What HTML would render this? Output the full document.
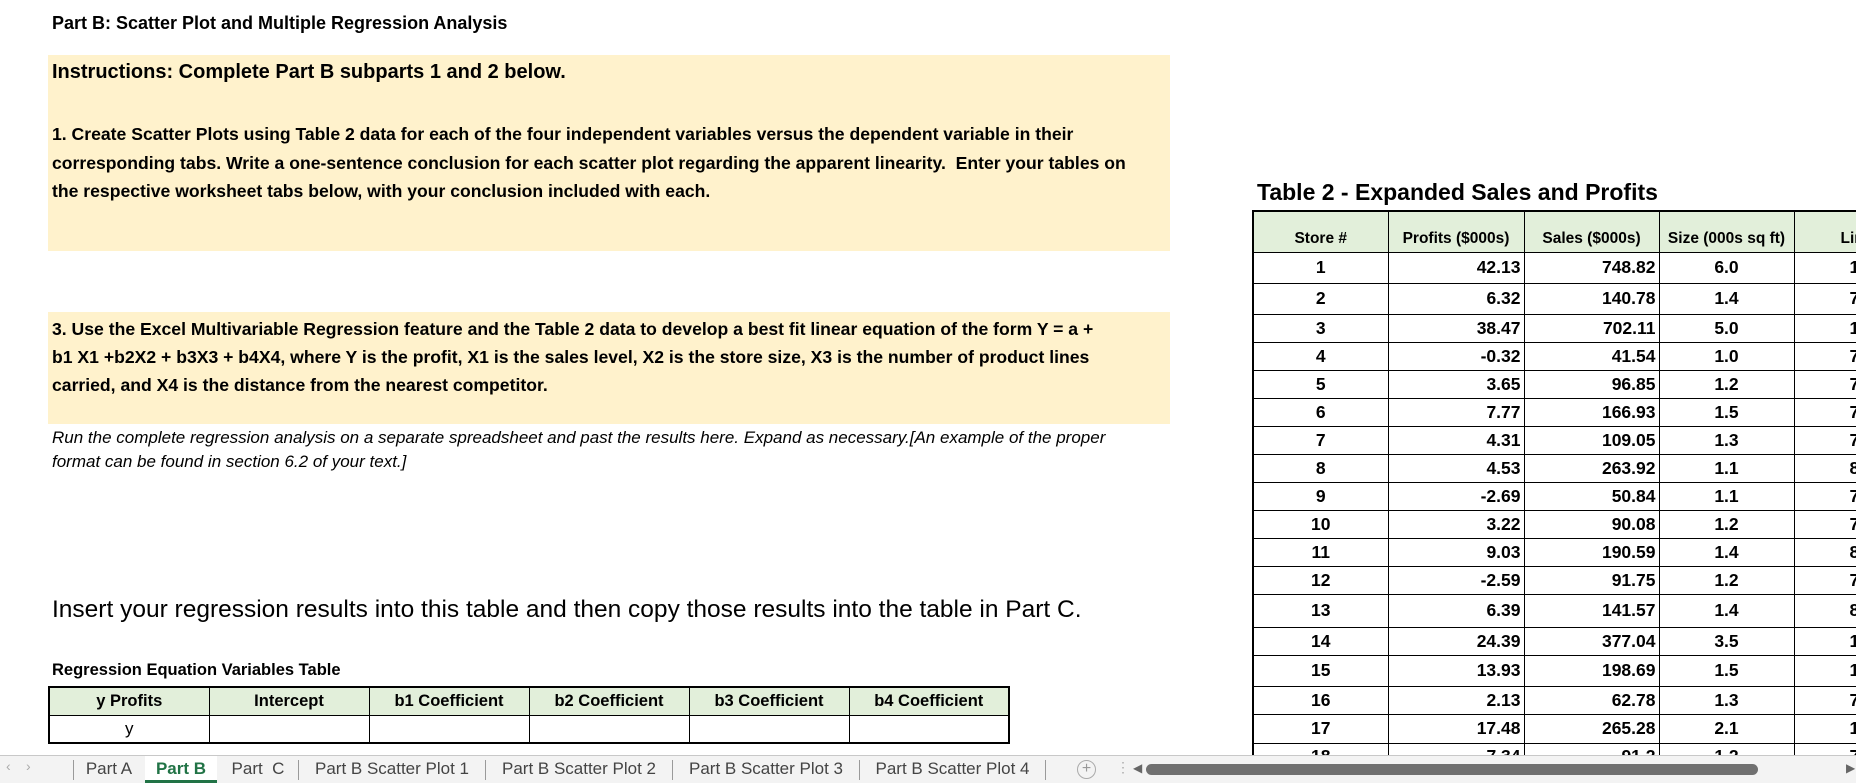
<!DOCTYPE html>
<html><head><meta charset="utf-8"><style>
*{margin:0;padding:0;box-sizing:border-box}
body{width:1856px;height:783px;overflow:hidden;background:#fff;position:relative;font-family:"Liberation Sans",sans-serif;color:#000}
.a{position:absolute;white-space:nowrap}
.b{font-weight:bold}
.y{position:absolute;background:#FFF2CC}
table{border-collapse:collapse;position:absolute;table-layout:fixed}
td{border:1px solid #000;font-weight:bold;white-space:nowrap;overflow:hidden;padding:0 3px}
.h td{background:#E2EFDA}
#t2 td{font-size:17.5px}
#t2 .h td{font-size:15.5px;text-align:center}
.c{text-align:center}.r{text-align:right}
#t2 td.l{text-align:left;padding-left:55px}
#tabs{position:absolute;left:0;top:755px;width:1856px;height:28px;background:#f3f3f3;border-top:1px solid #c8c8c8;font-size:17px;color:#444}
.tab{position:absolute;top:0;height:27px;line-height:25px;text-align:center}
.sep{position:absolute;top:4px;width:1px;height:20px;background:#9a9a9a}
</style></head><body>
<div class="a b" style="left:52px;top:13px;font-size:18px">Part B: Scatter Plot and Multiple Regression Analysis</div>
<div class="y" style="left:48px;top:55px;width:1122px;height:196px"></div>
<div class="y" style="left:48px;top:312px;width:1122px;height:112px"></div>
<div class="a b" style="left:52px;top:61px;font-size:20px">Instructions: Complete Part B subparts 1 and 2 below.</div>
<div class="a b" style="left:52px;top:120px;font-size:17.6px;line-height:28.5px">1. Create Scatter Plots using Table 2 data for each of the four independent variables versus the dependent variable in their<br>corresponding tabs. Write a one-sentence conclusion for each scatter plot regarding the apparent linearity.&nbsp; Enter your tables on<br>the respective worksheet tabs below, with your conclusion included with each.</div>
<div class="a b" style="left:52px;top:315px;font-size:17.6px;line-height:28px">3. Use the Excel Multivariable Regression feature and the Table 2 data to develop a best fit linear equation of the form Y = a +<br>b1 X1 +b2X2 + b3X3 + b4X4, where Y is the profit, X1 is the sales level, X2 is the store size, X3 is the number of product lines<br>carried, and X4 is the distance from the nearest competitor.</div>
<div class="a" style="left:52px;top:426px;font-size:17px;font-style:italic;line-height:24px">Run the complete regression analysis on a separate spreadsheet and past the results here. Expand as necessary.[An example of the proper<br>format can be found in section 6.2 of your text.]</div>
<div class="a" style="left:52px;top:596px;font-size:24.5px">Insert your regression results into this table and then copy those results into the table in Part C.</div>
<div class="a b" style="left:52px;top:661px;font-size:16.5px">Regression Equation Variables Table</div>
<table style="left:48px;top:686px;width:960px;border:2px solid #000">
<colgroup><col style="width:160px"><col style="width:160px"><col style="width:160px"><col style="width:160px"><col style="width:160px"><col style="width:160px"></colgroup>
<tr class="h" style="height:28px"><td class="c" style="font-size:16.5px">y Profits</td><td class="c" style="font-size:16.5px">Intercept</td><td class="c" style="font-size:16.5px">b1 Coefficient</td><td class="c" style="font-size:16.5px">b2 Coefficient</td><td class="c" style="font-size:16.5px">b3 Coefficient</td><td class="c" style="font-size:16.5px">b4 Coefficient</td></tr>
<tr style="height:28px"><td class="c" style="font-weight:normal;font-size:17px">y</td><td></td><td></td><td></td><td></td><td></td></tr>
</table>
<div class="a b" style="left:1257px;top:179px;font-size:23px">Table 2 - Expanded Sales and Profits</div>
<table id="t2" style="left:1252px;top:210px;width:661px;border:2px solid #000">
<colgroup><col style="width:135px"><col style="width:136px"><col style="width:135px"><col style="width:135px"><col style="width:120px"></colgroup>
<tr class="h" style="height:41px"><td style="vertical-align:bottom;padding-bottom:4px">Store #</td><td style="vertical-align:bottom;padding-bottom:4px">Profits ($000s)</td><td style="vertical-align:bottom;padding-bottom:4px">Sales ($000s)</td><td style="vertical-align:bottom;padding-bottom:4px">Size (000s sq ft)</td><td class="l" style="vertical-align:bottom;padding-bottom:4px;text-align:left;padding-left:46px">Lines</td></tr>
<tr style="height:31px"><td class="c">1</td><td class="r">42.13</td><td class="r">748.82</td><td class="c">6.0</td><td class="l">14</td></tr>
<tr style="height:31px"><td class="c">2</td><td class="r">6.32</td><td class="r">140.78</td><td class="c">1.4</td><td class="l">7</td></tr>
<tr style="height:28px"><td class="c">3</td><td class="r">38.47</td><td class="r">702.11</td><td class="c">5.0</td><td class="l">12</td></tr>
<tr style="height:28px"><td class="c">4</td><td class="r">-0.32</td><td class="r">41.54</td><td class="c">1.0</td><td class="l">7</td></tr>
<tr style="height:28px"><td class="c">5</td><td class="r">3.65</td><td class="r">96.85</td><td class="c">1.2</td><td class="l">7</td></tr>
<tr style="height:28px"><td class="c">6</td><td class="r">7.77</td><td class="r">166.93</td><td class="c">1.5</td><td class="l">7</td></tr>
<tr style="height:28px"><td class="c">7</td><td class="r">4.31</td><td class="r">109.05</td><td class="c">1.3</td><td class="l">7</td></tr>
<tr style="height:28px"><td class="c">8</td><td class="r">4.53</td><td class="r">263.92</td><td class="c">1.1</td><td class="l">8</td></tr>
<tr style="height:28px"><td class="c">9</td><td class="r">-2.69</td><td class="r">50.84</td><td class="c">1.1</td><td class="l">7</td></tr>
<tr style="height:28px"><td class="c">10</td><td class="r">3.22</td><td class="r">90.08</td><td class="c">1.2</td><td class="l">7</td></tr>
<tr style="height:28px"><td class="c">11</td><td class="r">9.03</td><td class="r">190.59</td><td class="c">1.4</td><td class="l">8</td></tr>
<tr style="height:28px"><td class="c">12</td><td class="r">-2.59</td><td class="r">91.75</td><td class="c">1.2</td><td class="l">7</td></tr>
<tr style="height:33px"><td class="c">13</td><td class="r">6.39</td><td class="r">141.57</td><td class="c">1.4</td><td class="l">8</td></tr>
<tr style="height:28px"><td class="c">14</td><td class="r">24.39</td><td class="r">377.04</td><td class="c">3.5</td><td class="l">12</td></tr>
<tr style="height:31px"><td class="c">15</td><td class="r">13.93</td><td class="r">198.69</td><td class="c">1.5</td><td class="l">10</td></tr>
<tr style="height:28px"><td class="c">16</td><td class="r">2.13</td><td class="r">62.78</td><td class="c">1.3</td><td class="l">7</td></tr>
<tr style="height:29px"><td class="c">17</td><td class="r">17.48</td><td class="r">265.28</td><td class="c">2.1</td><td class="l">10</td></tr>
<tr style="height:28px"><td class="c">18</td><td class="r">7.34</td><td class="r">91.2</td><td class="c">1.2</td><td class="l">7</td></tr>
</table>
<div id="tabs">
<div class="a" style="left:6px;top:2px;color:#aaa;font-size:14px">&#8249;</div>
<div class="a" style="left:26px;top:2px;color:#aaa;font-size:14px">&#8250;</div>
<div class="sep" style="left:73px"></div>
<div class="tab" style="left:74px;width:70px">Part A</div>
<div class="tab" style="left:145px;width:72px;background:#fff;color:#217346;font-weight:bold;border-bottom:3px solid #217346">Part B</div>
<div class="tab" style="left:218px;width:80px">Part&nbsp; C</div>
<div class="sep" style="left:298px"></div>
<div class="tab" style="left:299px;width:186px">Part B Scatter Plot 1</div>
<div class="sep" style="left:485px"></div>
<div class="tab" style="left:486px;width:186px">Part B Scatter Plot 2</div>
<div class="sep" style="left:672px"></div>
<div class="tab" style="left:673px;width:186px">Part B Scatter Plot 3</div>
<div class="sep" style="left:859px"></div>
<div class="tab" style="left:860px;width:185px">Part B Scatter Plot 4</div>
<div class="sep" style="left:1045px"></div>
<div class="a" style="left:1077px;top:4px;width:19px;height:19px;border:1px solid #aaa;border-radius:50%;color:#999;font-size:16px;line-height:16px;text-align:center">+</div>
<div class="a" style="left:1116px;top:3px;color:#aaa;font-size:14px">&#8942;</div>
<div class="a" style="left:1133px;top:5px;color:#666;font-size:12px">&#9664;</div>
<div class="a" style="left:1146px;top:8px;width:612px;height:11px;background:#707070;border-radius:6px"></div>
<div class="a" style="left:1846px;top:5px;color:#666;font-size:12px">&#9654;</div>
</div>
</body></html>
